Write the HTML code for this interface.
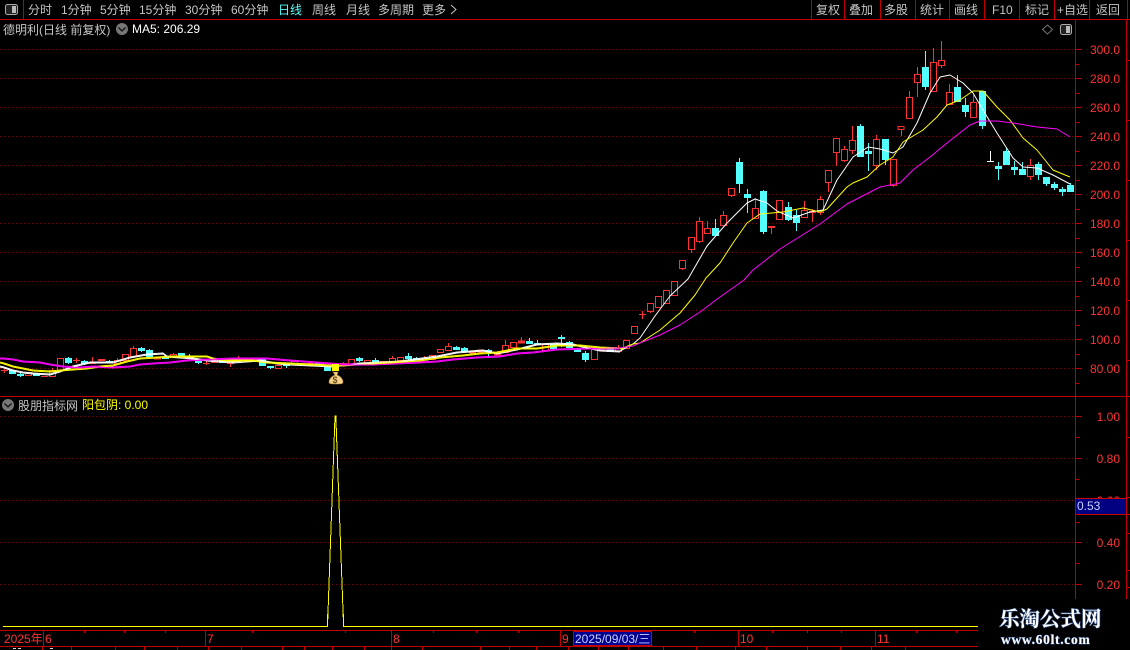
<!DOCTYPE html>
<html><head><meta charset="utf-8"><style>
html,body{margin:0;padding:0;background:#000;width:1130px;height:650px;overflow:hidden}
svg{position:absolute;left:0;top:0;display:block}
text{font-family:"Liberation Sans","Noto Sans CJK SC",sans-serif;font-size:12px}
.g{fill:#c4c4c4}
.r{fill:#ff3232}
</style></head><body>
<svg width="1130" height="650" viewBox="0 0 1130 650" xmlns="http://www.w3.org/2000/svg">
<!-- grid -->
<g stroke="#780000" stroke-width="1" stroke-dasharray="1 3" fill="none" shape-rendering="crispEdges">
<path d="M0 49.5H1076M0 78.5H1076M0 107.5H1076M0 136.5H1076M0 165.5H1076M0 194.5H1076M0 223.5H1076M0 252.5H1076M0 281.5H1076M0 310.5H1076M0 339.5H1076M0 368.5H1076"/>
<path d="M0 416.5H1076M0 458.5H1076M0 500.5H1076M0 542.5H1076M0 584.5H1076"/>
</g>
<!-- frame lines -->
<g stroke="#c00000" stroke-width="1" fill="none" shape-rendering="crispEdges">
<path d="M0 19.5H1130M0 396.5H1130M23.5 0V19M811.5 0V19M844.5 0V19M880.5 0V19M915.5 0V19M949.5 0V19M984.5 0V19M1019.5 0V19M1054.5 0V19M1089.5 0V19M1127.5 0V19"/>
<path d="M1075.5 19V599M1126.5 19V599"/>
<path d="M1076 49.5h6M1076 78.5h6M1076 107.5h6M1076 136.5h6M1076 165.5h6M1076 194.5h6M1076 223.5h6M1076 252.5h6M1076 281.5h6M1076 310.5h6M1076 339.5h6M1076 368.5h6M1076 64.5h3M1076 93.5h3M1076 122.5h3M1076 151.5h3M1076 180.5h3M1076 209.5h3M1076 238.5h3M1076 267.5h3M1076 296.5h3M1076 325.5h3M1076 354.5h3M1076 383.5h3"/>
<path d="M1076 416.5h6M1076 458.5h6M1076 542.5h6M1076 584.5h6M1076 437.5h3M1076 479.5h3M1076 522.5h3M1076 563.5h3"/>
<path d="M1127 60.5h3M1127 120.5h3M1127 180.5h3M1127 240.5h3M1127 300.5h3M1127 360.5h3M1127 437.5h3M1127 497.5h3M1127 514.5h3M1127 533.5h3M1127 570.5h3M1127 587.5h3"/>
<path d="M0 630.5H978M0 646.5H978"/>
<path d="M43.5 630V646M205.5 630V646M391.5 630V646M560.5 630V646M738.5 630V646M875.5 630V646"/>
<path d="M84.5 630v3M124.5 630v3M165.5 630v3M252.5 630v3M345.5 630v3M433.5 630v3M476.5 630v3M518.5 630v3M694.5 630v3M772.5 630v3M807.5 630v3M841.5 630v3M916.5 630v3M956.5 630v3"/>
<path d="M42.5 646v4M71.5 646v4M115.5 646v4M144.5 646v4M177.5 646v4M208.5 646v4M241.5 646v4M282.5 646v4M304.5 646v4M332.5 646v4M364.5 646v4M391.5 646v4M422.5 646v4M480.5 646v4M509.5 646v4M536.5 646v4M568.5 646v4M598.5 646v4M628.5 646v4M663.5 646v4M696.5 646v4M735.5 646v4M766.5 646v4M807.5 646v4M840.5 646v4M871.5 646v4M905.5 646v4"/>
</g>
<!-- cyan candles -->
<path shape-rendering="crispEdges" fill="#54ffff" stroke="#54ffff" stroke-width="1" d="
M12.5 370V374M9.5 370.5h6v3h-6zM20.5 373V377M17.5 374.5h6v1h-6zM36.5 373V375M33.5 373.5h6v2h-6z
M68.5 357V364M65.5 358.5h6v4h-6zM84.5 360V365M81.5 361.5h6v2h-6zM109.5 360V363M106.5 361.5h6v1h-6z
M141.5 347V352M138.5 348.5h6v2h-6zM149.5 349V356M146.5 350.5h6v6h-6zM165.5 355V359M162.5 357.5h6v1h-6z
M181.5 353V356M178.5 353.5h6v3h-6zM189.5 354V359M186.5 356.5h6v2h-6zM198.5 360V364M195.5 360.5h6v2h-6z
M222.5 360V363M219.5 360.5h6v2h-6zM246.5 358V361M243.5 359.5h6v1h-6zM262.5 359V365M259.5 359.5h6v6h-6z
M270.5 366V369M267.5 366.5h6v1h-6zM286.5 364V368M283.5 364.5h6v1h-6zM318.5 362V365M315.5 363.5h6v1h-6z
M327.5 366V370M324.5 366.5h6v4h-6zM359.5 357V362M356.5 358.5h6v2h-6zM375.5 358V364M372.5 360.5h6v2h-6z
M408.5 353V360M405.5 356.5h6v2h-6zM416.5 357V360M413.5 358.5h6v1h-6zM456.5 346V350M453.5 347.5h6v2h-6z
M464.5 347V351M461.5 348.5h6v3h-6zM488.5 349V356M485.5 350.5h6v1h-6zM529.5 338V343M526.5 341.5h6v2h-6z
M537.5 340V344M534.5 343.5h6v1h-6zM553.5 344V349M550.5 344.5h6v4h-6zM561.5 335V347M558.5 337.5h6v1h-6z
M569.5 341V347M566.5 342.5h6v5h-6zM577.5 348V351M574.5 348.5h6v3h-6zM585.5 351V362M582.5 353.5h6v6h-6z
M610.5 347V351M607.5 347.5h6v4h-6z
M715.5 219V235M712.5 228.5h6v7h-6zM739.5 158V193M736.5 162.5h6v21h-6zM747.5 189V213M744.5 194.5h6v3h-6z
M763.5 190V234M760.5 191.5h6v40h-6zM788.5 202V221M785.5 207.5h6v12h-6zM796.5 210V231M793.5 215.5h6v7h-6z
M860.5 124V157M857.5 126.5h6v30h-6zM868.5 143V171M865.5 151.5h6v2h-6zM885.5 139V165M882.5 139.5h6v20h-6z
M925.5 51V90M922.5 67.5h6v19h-6zM957.5 75V101M954.5 87.5h6v14h-6zM965.5 98V117M962.5 105.5h6v6h-6z
M982.5 91V129M979.5 91.5h6v34h-6zM998.5 162V180M995.5 166.5h6v2h-6zM1006.5 148V164M1003.5 151.5h6v13h-6z
M1014.5 161V175M1011.5 167.5h6v2h-6zM1022.5 162V174M1019.5 169.5h6v5h-6zM1038.5 162V180M1035.5 164.5h6v10h-6z
M1046.5 177V186M1043.5 177.5h6v6h-6zM1054.5 182V190M1051.5 184.5h6v3h-6zM1062.5 187V196M1059.5 189.5h6v2h-6z
M1070.5 183V191M1067.5 185.5h6v6h-6z"/>
<!-- white doji -->
<path shape-rendering="crispEdges" fill="none" stroke="#fff" d="M990.5 151V161M987 161.5h7"/>
<!-- red candles -->
<path shape-rendering="crispEdges" fill="none" stroke="#ff3232" stroke-width="1" d="
M4.5 369V373M1 370.5h7M25.5 372.5h6v3h-6zM41 376.5h7M52.5 368V370M49.5 370.5h6v6h-6zM57.5 358.5h6v12h-6z
M76.5 358V363M73 360.5h7M92.5 357V362M89.5 362.5h6v1h-6zM98 359.5h7v1h-7M98 360.5h7M117.5 358V360M114.5 360.5h6v3h-6z
M122.5 354.5h6v6h-6zM133.5 346V348M130.5 348.5h6v8h-6zM154 358h7M154 359h7M154 357.5h7M173.5 353V354M170.5 354.5h6v2h-6zM173.5 357V358
M206.5 361V365M203 363.5h7M211.5 360.5h6v2h-6zM230.5 363V367M227.5 361.5h6v2h-6zM238.5 356V358M235.5 358.5h6v2h-6z
M251 359.5h7M275.5 365.5h6v3h-6zM294.5 360V361M291.5 361.5h6v2h-6zM299 363.5h7M310.5 362V363M307 363.5h7
M340.5 363.5h6v2h-6zM343.5 362V363M348.5 359.5h6v5h-6zM364.5 360.5h6v3h-6zM380.5 361.5h6v2h-6zM392.5 356V358M389.5 358.5h6v5h-6z
M397.5 357.5h6v3h-6zM424.5 356V359M421.5 359.5h6v2h-6zM429.5 355.5h6v4h-6zM437.5 349.5h6v3h-6zM448.5 343V346M445.5 346.5h6v4h-6z
M469 351h7M469 352h7M469 353h7M477 350h7M477 351h7M477 352h7M494 353h7M494 354h7M494 355h7M497.5 351V353
M505.5 340V345M502.5 345.5h6v7h-6zM510.5 342.5h6v5h-6zM518 341h7M518 342h7M518 343h7M521.5 337V341
M542.5 344.5h6v6h-6zM591.5 348.5h6v11h-6zM599.5 347.5h6v3h-6zM618.5 345V348M615.5 348.5h6v3h-6zM623.5 340.5h6v8h-6zM631.5 326.5h6v7h-6z
M642.5 311V319M639 314.5h7M647.5 303.5h6v8h-6zM650.5 311V313M655.5 296.5h6v11h-6zM663.5 290.5h6v13h-6zM671.5 281.5h6v14h-6z
M679.5 260.5h6v8h-6zM682.5 268V270M688.5 237.5h6v12h-6zM691.5 249V253M696.5 221.5h6v20h-6zM699.5 217V221M699.5 241V243
M704.5 228.5h6v5h-6zM707.5 221V228M720.5 215.5h6v10h-6zM723.5 211V215M728.5 188.5h6v7h-6zM731.5 195V197
M752.5 208.5h6v10h-6zM755.5 198V208M768 226.5h7M768 227.5h7M771.5 228V234M776.5 200.5h6v19h-6zM804.5 201V210M801.5 210.5h6v7h-6z
M809 211.5h7M809 212.5h7M812.5 209V211M812.5 213V222M817.5 199.5h6v13h-6zM820.5 196V199M820.5 212V215M825.5 170.5h6v12h-6zM828.5 182V192
M833.5 138.5h6v14h-6zM836.5 152V166M841.5 149.5h6v11h-6zM844.5 146V149M844.5 160V162M849.5 140.5h6v10h-6zM852.5 126V140M852.5 150V154
M873.5 139.5h6v26h-6zM876.5 135V139M876.5 165V170
M890.5 159.5h6v26h-6zM893.5 185V187M898 126.5h6v3h-6zM901.5 129V136M906.5 97.5h6v21h-6zM909.5 91V97
M914.5 74.5h6v8h-6zM917.5 67V74M917.5 82V97M930.5 62.5h6v29h-6zM933.5 48V62M938.5 60.5h6v5h-6zM941.5 41V60M941.5 65V68
M946.5 92.5h6v12h-6zM949.5 84V92M970.5 102.5h6v15h-6zM973.5 95V102M1027.5 165.5h6v11h-6zM1030.5 159V165M1030.5 176V180"/>
<!-- moving averages -->
<g fill="none" stroke-linejoin="round">
<polyline stroke="#fff" stroke-width="1" points="0,366 4,367 13,370 23,372 33,373 50,374 60,371 73,366 90,362 113,362 130,357 147,354 163,353 167,356 193,358 207,360 233,362 260,360 277,363 290,364 333,366 340,365 360,363 400,361 437,356 457,352 483,350 497,353 517,349 537,344 557,343 573,344 600,350 620,351 633,344 640,338 655,316 670,296 688,279 707,246 727,223 747,203 755,199 767,203 777,211 793,218 810,212 823,210 837,180 853,157 868,147 880,149 893,153 903,147 917,123 930,93 940,77 950,75 963,83 973,93 983,110 997,133 1013,158 1023,167 1037,168 1053,175 1070,184"/>
<polyline stroke="#ffff00" stroke-width="1" points="0,362 4,363 13,366 23,368 33,370 50,371 60,370 73,369 87,368 100,366 113,365 127,361 140,358 157,357 173,356 207,356 213,358 227,360 253,360 267,362 290,363 310,364 333,365 343,365 357,364 390,362 420,360 440,357 463,355 480,353 497,352 517,348 537,348 557,345 580,345 600,347 623,348 633,344 640,343 660,330 680,313 695,295 706,278 720,263 733,243 747,223 760,214 783,212 803,208 820,212 827,209 847,187 853,183 867,177 880,165 893,157 903,142 923,130 937,117 947,105 960,100 973,91 983,91 997,107 1010,120 1023,138 1037,150 1053,170 1070,177"/>
<polyline stroke="#ff00ff" stroke-width="1" points="0,358 4,358 13,359 23,361 40,362 50,364 63,366 80,367 93,366 113,367 130,366 140,364 153,363 170,362 187,360 207,359 233,358 267,358 290,360 317,362 343,364 373,364 420,362 437,361 453,359 477,357 500,356 517,353 533,352 557,349 590,348 620,348 633,346 640,343 660,335 680,325 700,312 720,297 744,280 753,270 780,249 820,224 847,204 880,187 900,183 913,170 930,157 947,143 970,125 980,121 997,121 1013,123 1037,127 1057,129 1070,137"/>
</g>
<g fill="none" stroke-width="1" transform="translate(0,1)">
<polyline stroke="#fff" points="0,366 4,367 13,370 23,372 33,373 50,374 60,371 73,366 90,362 113,362 130,357 147,354 163,353 167,356 193,358 207,360 233,362 260,360 277,363 290,364 333,366 340,365 360,363 400,361 437,356 457,352 483,350 497,353 517,349 537,344 557,343 573,344 600,350 620,351"/>
<polyline stroke="#ffff00" points="0,362 4,363 13,366 23,368 33,370 50,371 60,370 73,369 87,368 100,366 113,365 127,361 140,358 157,357 173,356 207,356 213,358 227,360 253,360 267,362 290,363 310,364 333,365 343,365 357,364 390,362 420,360 440,357 463,355 480,353 497,352 517,348 537,348 557,345 580,345 600,347 623,348"/>
<polyline stroke="#ff00ff" points="0,358 4,358 13,359 23,361 40,362 50,364 63,366 80,367 93,366 113,367 130,366 140,364 153,363 170,362 187,360 207,359 233,358 267,358 290,360 317,362 343,364 373,364 420,362 437,361 453,359 477,357 500,356 517,353 533,352 557,349 590,348 620,348"/>
</g>
<!-- yellow marker + money bag -->
<rect x="332" y="364" width="7" height="7" fill="#ffff00"/>
<path d="M333 372h5l-1 3c3 1 6 4 6 7 0 2-2 2-7 2s-7 0-7-2c0-3 3-6 6-7z" fill="#f5d48a" stroke="#b08030" stroke-width=".6"/>
<text x="332.5" y="383" style="font-size:9px;font-weight:bold" fill="#6a4a20">$</text>
<!-- sub indicator -->
<path shape-rendering="crispEdges" fill="none" stroke="#ffff00" stroke-width="1" d="M3 626.5H327.5L335 416L335.8 416L343.6 626.5H978"/>
<path shape-rendering="crispEdges" fill="none" stroke="#ffff00" stroke-width="1" d="M327.5 626V614M343.5 626V614"/>
<!-- axis labels -->
<g class="r" text-anchor="end">
<text x="1120" y="54">300.0</text><text x="1120" y="83">280.0</text><text x="1120" y="112">260.0</text><text x="1120" y="141">240.0</text><text x="1120" y="170">220.0</text><text x="1120" y="199">200.0</text><text x="1120" y="228">180.0</text><text x="1120" y="257">160.0</text><text x="1120" y="286">140.0</text><text x="1120" y="315">120.0</text><text x="1120" y="344">100.0</text><text x="1120" y="373">80.00</text>
<text x="1120" y="421">1.00</text><text x="1120" y="463">0.80</text><text x="1120" y="505">0.60</text><text x="1120" y="547">0.40</text><text x="1120" y="589">0.20</text>
</g>
<rect x="1076" y="498" width="50" height="17" fill="#000080"/>
<path shape-rendering="crispEdges" stroke="#d00000" d="M1076 498.5H1127M1076 514.5H1127"/>
<text x="1077" y="510" fill="#c8d0ff">0.53</text>
<!-- top bar -->
<rect x="5.5" y="4.5" width="12" height="10" rx="2" fill="#222" stroke="#aaa"/>
<rect x="12" y="6" width="4" height="7" fill="#bbb"/>
<g class="g">
<text x="28" y="14">分时</text><text x="61" y="14">1分钟</text><text x="100" y="14">5分钟</text><text x="139" y="14">15分钟</text><text x="185" y="14">30分钟</text><text x="231" y="14">60分钟</text>
<text x="278" y="14" style="fill:#54ffff">日线</text>
<text x="312" y="14">周线</text><text x="346" y="14">月线</text><text x="378" y="14">多周期</text><text x="422" y="14">更多</text>
<text x="816" y="14">复权</text><text x="849" y="14">叠加</text><text x="884" y="14">多股</text><text x="920" y="14">统计</text><text x="954" y="14">画线</text><text x="992" y="14">F10</text><text x="1025" y="14">标记</text><text x="1057" y="14">+自选</text><text x="1096" y="14">返回</text>
<text x="3" y="34">德明利(日线 前复权)</text>
<text x="18" y="410">股朋指标网</text>
</g>
<path d="M451 5l5 4.5-5 4.5" fill="none" stroke="#c4c4c4"/>
<circle cx="122" cy="29" r="6" fill="#777"/><path d="M118.5 27.5l3.5 3.5 3.5-3.5" fill="none" stroke="#111" stroke-width="1.3"/>
<text x="132" y="33" fill="#fff">MA5: 206.29</text>
<path d="M1047.5 25l5 4.5-5 4.5-5-4.5z" fill="none" stroke="#777"/>
<rect x="1060.5" y="24.5" width="11" height="10" rx="2" fill="#222" stroke="#aaa"/><rect x="1066" y="26" width="4" height="7" fill="#bbb"/>
<circle cx="8" cy="405" r="6" fill="#777"/><path d="M4.5 403.5l3.5 3.5 3.5-3.5" fill="none" stroke="#111" stroke-width="1.3"/>
<text x="82" y="409" fill="#ffff00">阳包阴: 0.00</text>
<!-- date axis -->
<g class="r">
<text x="4" y="643">2025年</text><text x="45" y="643">6</text><text x="207" y="643">7</text><text x="393" y="643">8</text><text x="562" y="643">9</text><text x="740" y="643">10</text><text x="877" y="643">11</text>
</g>
<rect x="573.5" y="631.5" width="78" height="14" fill="#000090" stroke="#c00000"/>
<text x="575" y="643" fill="#c8d0ff">2025/09/03/三</text>
<path shape-rendering="crispEdges" stroke="#ddd" d="M13 648.5h3M18 648.5h3M50 648.5h3"/>
<!-- watermark -->
<rect x="978" y="599" width="152" height="51" fill="#000"/>
<text x="999" y="626" style="font-family:'Liberation Serif','Noto Serif CJK SC',serif;font-size:20.5px;font-weight:bold;paint-order:stroke" fill="#fff" stroke="#2c4a80" stroke-width="1.2">乐淘公式网</text>
<text x="1001" y="644" style="font-family:'Liberation Serif',serif;font-size:13.5px;font-weight:bold;letter-spacing:.7px;paint-order:stroke" fill="#fff" stroke="#2c4a80" stroke-width="1">www.60lt.com</text>
</svg>
</body></html>
